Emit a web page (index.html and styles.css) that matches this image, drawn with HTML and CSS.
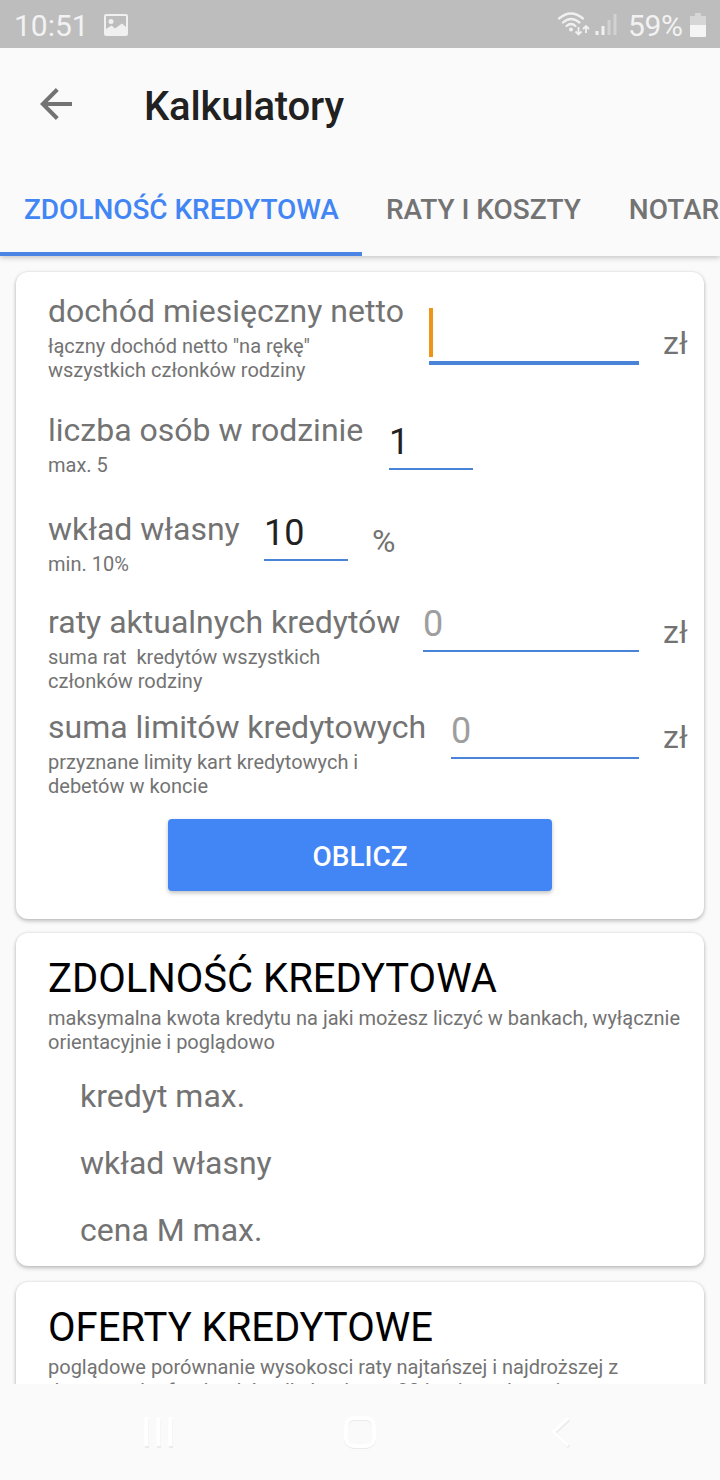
FILE: index.html
```
<!DOCTYPE html>
<html lang="pl">
<head>
    <meta charset="UTF-8">
    <title>Kalkulatory</title>
    <link rel="stylesheet" href="styles.css">
</head>
<body>
    <div class="phone">
        <div class="status">
            <span class="time">10:51</span>
            <svg class="pic" width="24" height="22" viewBox="0 0 24 22">
                <path fill="#f0f0f0" fill-rule="evenodd" d="M2 0H22Q24 0 24 2V20Q24 22 22 22H2Q0 22 0 20V2Q0 0 2 0ZM2 2V15L7.500 11.500L11 14.500L18 9.500L22 13V2ZM7 5A2.500 2.500 0 1 1 7 10A2.500 2.500 0 1 1 7 5Z"/>
            </svg>
            <svg class="signal" width="62" height="26" viewBox="0 0 62 26">
                <g fill="none" stroke="#f0f0f0" stroke-width="2.300" stroke-linecap="round">
                    <path d="M2 6.500Q14 -3.500 26 6.500"/>
                    <path d="M6 10.500Q14 3.500 22.500 10.500"/>
                    <path d="M9.500 14Q14 10 18.500 14"/>
                </g>
                <circle cx="14" cy="17.500" r="2" fill="#f0f0f0"/>
                <path fill="none" stroke="#f0f0f0" stroke-width="1.800" d="M21.500 15V22.500M18.500 19.500L21.500 22.500L24.500 19.500M29 21V14.500M26 17L29 14L32 17"/>
                <path fill="#f0f0f0" d="M38.500 19h3v4h-3zM44.500 14h3v9h-3z"/>
                <path fill="#d2d2d2" d="M50.500 8h3v15h-3zM56.500 2h3v21h-3z"/>
            </svg>
            <span class="percent">59%</span>
            <svg class="battery" width="16" height="24" viewBox="0 0 16 24">
                <path fill="#d6d6d6" d="M5 0h6v3h5v9H0V3h5z"/>
                <path fill="#f5f5f5" d="M0 12h16v11q0 1-1 1H1q-1 0-1-1z"/>
            </svg>
        </div>
        <div class="header">
            <div class="toolbar">
                <svg width="32" height="32" viewBox="0 0 32 32">
                    <path fill="none" stroke="#737373" stroke-width="4" d="M32 16H3M17.300 1.500L2.800 16L17.300 30.500"/>
                </svg>
                <h1 class="title">Kalkulatory</h1>
            </div>
            <div class="tabs">
                <div class="tab active">ZDOLNOŚĆ KREDYTOWA</div>
                <div class="tab">RATY I KOSZTY</div>
                <div class="tab">NOTARIUSZ</div>
            </div>
        </div>
        <div class="content">
            <div class="card form">
                <div class="row income">
                    <div class="label">
                        <div class="name">dochód miesięczny netto</div>
                        <div class="hint">łączny dochód netto "na rękę"<br>wszystkich członków rodziny</div>
                    </div>
                    <div class="field wide focus"><span class="cursor"></span></div>
                    <div class="unit">zł</div>
                </div>
                <div class="row people">
                    <div class="label">
                        <div class="name">liczba osób w rodzinie</div>
                        <div class="hint">max. 5</div>
                    </div>
                    <div class="field">1</div>
                </div>
                <div class="row own">
                    <div class="label">
                        <div class="name">wkład własny</div>
                        <div class="hint">min. 10%</div>
                    </div>
                    <div class="field">10</div>
                    <div class="unit">%</div>
                </div>
                <div class="row rates">
                    <div class="label">
                        <div class="name">raty aktualnych kredytów</div>
                        <div class="hint">suma rat&nbsp; kredytów wszystkich<br>członków rodziny</div>
                    </div>
                    <div class="field wide empty">0</div>
                    <div class="unit">zł</div>
                </div>
                <div class="row limits">
                    <div class="label">
                        <div class="name">suma limitów kredytowych</div>
                        <div class="hint">przyznane limity kart kredytowych i<br>debetów w koncie</div>
                    </div>
                    <div class="field wide empty">0</div>
                    <div class="unit">zł</div>
                </div>
                <button class="btn">OBLICZ</button>
            </div>
            <div class="card result">
                <h2 class="heading">ZDOLNOŚĆ KREDYTOWA</h2>
                <div class="hint">maksymalna kwota kredytu na jaki możesz liczyć w bankach, wyłącznie<br>orientacyjnie i poglądowo</div>
                <ul class="values">
                    <li>kredyt max.</li>
                    <li>wkład własny</li>
                    <li>cena M max.</li>
                </ul>
            </div>
            <div class="card offers">
                <h2 class="heading">OFERTY KREDYTOWE</h2>
                <div class="hint">poglądowe porównanie wysokosci raty najtańszej i najdroższej z<br>dostępnych ofert banków dla kredytu o 30 letnim spłacaniu</div>
            </div>
        </div>
        <div class="navbar">
            <svg width="32" height="34" viewBox="0 0 32 34">
                <path stroke="#ececec" stroke-width="4" d="M4 4V33M16 4V33M28 4V33"/>
                <path stroke="#fff" stroke-width="4" d="M3.500 2V31M15.500 2V31M27.500 2V31"/>
            </svg>
            <svg width="36" height="36" viewBox="0 0 36 36">
                <rect x="4" y="5" width="28" height="28" rx="8" fill="none" stroke="#ebebeb" stroke-width="4"/>
                <rect x="4" y="4" width="28" height="28" rx="8" fill="none" stroke="#fff" stroke-width="4"/>
            </svg>
            <svg width="22" height="34" viewBox="0 0 22 34">
                <path fill="none" stroke="#ebebeb" stroke-width="3" d="M19 5L5 18L19 32"/>
                <path fill="none" stroke="#fff" stroke-width="3" d="M18 3.500L3.500 17L18 30.500"/>
            </svg>
        </div>
    </div>
</body>
</html>
```
FILE: styles.css
```
*{
    box-sizing: border-box;
}
body{
    margin: 0;
    font-family: Roboto, "Liberation Sans", sans-serif;
    background-color: #fafafa;
}
h1,h2,ul{
    margin: 0;
    padding: 0;
    font-weight: 400;
}
svg{
    display: block;
    flex: none;
}
.phone{
    width: 720px;
    height: 1480px;
    display: flex;
    flex-direction: column;
    overflow: hidden;
}
/*status bar*/
.status{
    height: 48px;
    flex: none;
    display: flex;
    align-items: center;
    padding: 2px 14px 0 14px;
    background-color: #bdbdbd;
    color: #f2f2f2;
    font-size: 30px;
}
.time{
    width: 90px;
}
.signal{
    margin-left: auto;
    margin-right: 9px;
}
.percent{
    width: 62px;
    font-size: 30px;
    letter-spacing: -.3px;
}
/*header with tabs*/
.header{
    height: 208px;
    flex: none;
    position: relative;
    z-index: 1;
    background-color: #fafafa;
    box-shadow: 0 2px 5px rgba(0,0,0,.2);
    clip-path: inset(0 0 -12px 0);
}
.toolbar{
    height: 112px;
    display: flex;
    align-items: center;
    padding-left: 40px;
}
.title{
    margin-left: 72px;
    padding-top: 4px;
    font-size: 40px;
    font-weight: 500;
    letter-spacing: -.15px;
    color: #212121;
}
.tabs{
    height: 96px;
    display: flex;
}
.tab{
    flex: none;
    padding: 0 24px;
    line-height: 100px;
    font-size: 28px;
    font-weight: 500;
    letter-spacing: -.05px;
    white-space: nowrap;
    color: #737373;
}
.tab.active{
    width: 362px;
    height: 96px;
    color: #4285f4;
    border-bottom: 4px solid #4a84e4;
}
/*cards*/
.content{
    flex: 1;
    min-height: 0;
    overflow: hidden;
    padding: 16px 16px 0 16px;
}
.card{
    padding-left: 32px;
    border-radius: 12px;
    background-color: #fff;
    box-shadow: 0 2px 4px rgba(0,0,0,.24), 0 0 3px rgba(0,0,0,.1);
}
.form{
    height: 647px;
    margin-bottom: 14px;
    padding-top: 20px;
}
.row{
    display: flex;
    align-items: flex-start;
    padding-right: 17px;
}
.income{ height: 119px; }
.people{ height: 99px; }
.own{ height: 93px; }
.rates{ height: 105px; }
.limits{ height: 111px; }
.label{
    flex: none;
    white-space: nowrap;
    color: #737373;
}
.name{
    height: 42px;
    font-size: 32px;
    line-height: 38px;
}
.hint{
    font-size: 20px;
    line-height: 24px;
    color: #737373;
}
.income .label{ width: 381px; }
.people .label{ width: 341px; }
.own .label{ width: 216px; }
.rates .label{ width: 375px; }
.limits .label{ width: 403px; }
.field{
    width: 84px;
    height: 49px;
    flex: none;
    font-size: 36px;
    line-height: 42px;
    color: #212121;
    border-bottom: 2px solid #4a84d8;
}
.field.wide{
    width: auto;
    flex: 1;
}
.field.focus{
    height: 57px;
    border-bottom-width: 4px;
}
.field.empty{
    color: #9e9e9e;
}
.income .field{ margin-top: 16px; }
.people .field{ margin-top: 10px; }
.own .field,.limits .field{ margin-top: 2px; }
.cursor{
    display: block;
    width: 4px;
    height: 49px;
    background-color: #ee9418;
}
.unit{
    width: 24px;
    margin: 10px 0 0 24px;
    font-size: 32px;
    line-height: 38px;
    color: #737373;
}
.income .unit{ margin-top: 32px; }
.own .unit{ margin-top: 12px; }
.btn{
    display: block;
    width: 384px;
    height: 72px;
    margin-left: 120px;
    padding: 3px 0 0 0;
    border: none;
    border-radius: 4px;
    background-color: #4285f4;
    box-shadow: 0 2px 4px rgba(0,0,0,.25);
    font-family: inherit;
    font-size: 28px;
    font-weight: 500;
    color: #fff;
}
.result{
    height: 333px;
    margin-bottom: 16px;
    padding-top: 22px;
}
.offers{
    height: 400px;
    padding-top: 22px;
}
.heading{
    height: 51px;
    font-size: 40px;
    line-height: 47px;
    color: #000;
}
.result,.offers{
    white-space: nowrap;
}
.values{
    padding: 23px 0 0 32px;
    list-style: none;
    font-size: 32px;
    line-height: 38px;
    color: #737373;
}
.values li{
    margin-bottom: 29px;
}
/*system buttons*/
.navbar{
    height: 96px;
    flex: none;
    display: flex;
    align-items: center;
    justify-content: space-between;
    padding: 0 148px 0 143px;
}
.navbar svg:nth-child(2){
    margin-right: 5px;
}
```
